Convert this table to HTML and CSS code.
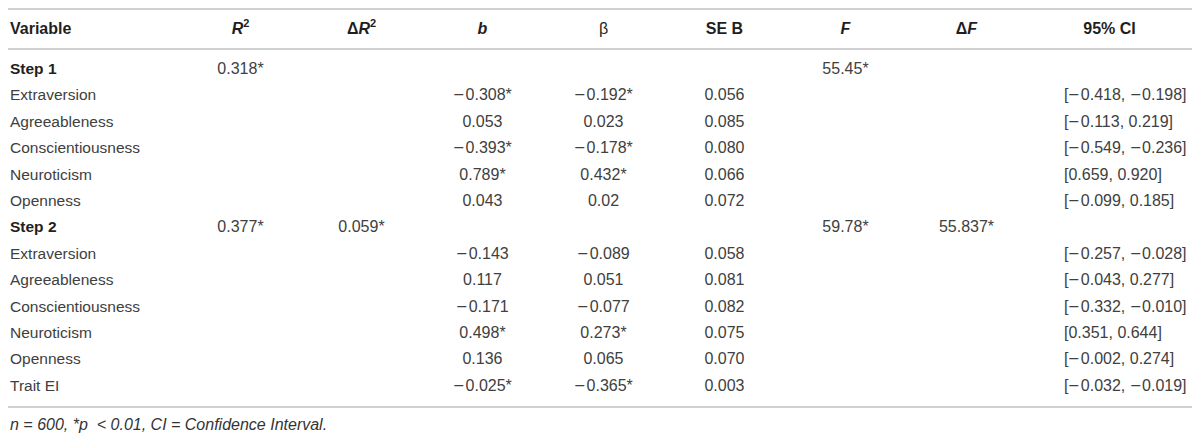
FILE: index.html
```html
<!DOCTYPE html>
<html>
<head>
  <meta charset="utf-8">
  <title>Hierarchical regression</title>
  <link rel="stylesheet" href="styles.css">
</head>
<body>
  <table class="reg-table">
    <colgroup>
      <col class="col-var">
      <col class="col-num"><col class="col-num"><col class="col-num"><col class="col-num">
      <col class="col-num"><col class="col-num"><col class="col-num">
      <col class="col-ci">
    </colgroup>
    <thead>
      <tr>
        <th class="left">Variable</th>
        <th><i>R</i><sup>2</sup></th>
        <th>&Delta;<i>R</i><sup>2</sup></th>
        <th><i>b</i></th>
        <th class="beta">&beta;</th>
        <th>SE B</th>
        <th><i>F</i></th>
        <th>&Delta;<i>F</i></th>
        <th>95% CI</th>
      </tr>
    </thead>
    <tbody>
      <tr class="first">
        <td class="left step">Step 1</td>
        <td>0.318*</td><td></td><td></td><td></td><td></td>
        <td>55.45*</td><td></td><td class="ci"></td>
      </tr>
      <tr>
        <td class="left">Extraversion</td>
        <td></td><td></td><td><span class="neg">&minus;</span>0.308*</td><td><span class="neg">&minus;</span>0.192*</td><td>0.056</td>
        <td></td><td></td><td class="ci">[<span class="neg">&minus;</span>0.418, <span class="neg">&minus;</span>0.198]</td>
      </tr>
      <tr>
        <td class="left">Agreeableness</td>
        <td></td><td></td><td>0.053</td><td>0.023</td><td>0.085</td>
        <td></td><td></td><td class="ci">[<span class="neg">&minus;</span>0.113, 0.219]</td>
      </tr>
      <tr>
        <td class="left">Conscientiousness</td>
        <td></td><td></td><td><span class="neg">&minus;</span>0.393*</td><td><span class="neg">&minus;</span>0.178*</td><td>0.080</td>
        <td></td><td></td><td class="ci">[<span class="neg">&minus;</span>0.549, <span class="neg">&minus;</span>0.236]</td>
      </tr>
      <tr>
        <td class="left">Neuroticism</td>
        <td></td><td></td><td>0.789*</td><td>0.432*</td><td>0.066</td>
        <td></td><td></td><td class="ci">[0.659, 0.920]</td>
      </tr>
      <tr>
        <td class="left">Openness</td>
        <td></td><td></td><td>0.043</td><td>0.02</td><td>0.072</td>
        <td></td><td></td><td class="ci">[<span class="neg">&minus;</span>0.099, 0.185]</td>
      </tr>
      <tr>
        <td class="left step">Step 2</td>
        <td>0.377*</td><td>0.059*</td><td></td><td></td><td></td>
        <td>59.78*</td><td>55.837*</td><td class="ci"></td>
      </tr>
      <tr>
        <td class="left">Extraversion</td>
        <td></td><td></td><td><span class="neg">&minus;</span>0.143</td><td><span class="neg">&minus;</span>0.089</td><td>0.058</td>
        <td></td><td></td><td class="ci">[<span class="neg">&minus;</span>0.257, <span class="neg">&minus;</span>0.028]</td>
      </tr>
      <tr>
        <td class="left">Agreeableness</td>
        <td></td><td></td><td>0.117</td><td>0.051</td><td>0.081</td>
        <td></td><td></td><td class="ci">[<span class="neg">&minus;</span>0.043, 0.277]</td>
      </tr>
      <tr>
        <td class="left">Conscientiousness</td>
        <td></td><td></td><td><span class="neg">&minus;</span>0.171</td><td><span class="neg">&minus;</span>0.077</td><td>0.082</td>
        <td></td><td></td><td class="ci">[<span class="neg">&minus;</span>0.332, <span class="neg">&minus;</span>0.010]</td>
      </tr>
      <tr>
        <td class="left">Neuroticism</td>
        <td></td><td></td><td>0.498*</td><td>0.273*</td><td>0.075</td>
        <td></td><td></td><td class="ci">[0.351, 0.644]</td>
      </tr>
      <tr>
        <td class="left">Openness</td>
        <td></td><td></td><td>0.136</td><td>0.065</td><td>0.070</td>
        <td></td><td></td><td class="ci">[<span class="neg">&minus;</span>0.002, 0.274]</td>
      </tr>
      <tr class="last">
        <td class="left">Trait EI</td>
        <td></td><td></td><td><span class="neg">&minus;</span>0.025*</td><td><span class="neg">&minus;</span>0.365*</td><td>0.003</td>
        <td></td><td></td><td class="ci">[<span class="neg">&minus;</span>0.032, <span class="neg">&minus;</span>0.019]</td>
      </tr>
    </tbody>
  </table>
  <p class="table-note"><i>n</i> = 600, *<i>p</i> &nbsp;&lt; 0.01, CI = Confidence Interval.</p>
</body>
</html>
```

FILE: styles.css
```css
body {
  margin: 8px;
  background: #fff;
  font-family: "Liberation Sans", Arial, sans-serif;
  font-size: 15.5px;
  color: #404040;
}

.reg-table {
  width: 1184px;
  border-collapse: collapse;
  table-layout: fixed;
  border-top: 2px solid #d0d0d0;
  border-bottom: 2px solid #d0d0d0;
}

.col-var { width: 172px; }
.col-num { width: 121px; }
.col-ci { width: 165px; }

.reg-table th {
  padding: 0;
  height: 38px;
  font-size: 16px;
  font-weight: bold;
  color: #1f1f1f;
  text-align: center;
  border-bottom: 2px solid #d0d0d0;
}

.reg-table th.left {
  text-align: left;
  padding-left: 2px;
}

.reg-table th sup {
  font-size: 11px;
  line-height: 0;
  vertical-align: 7px;
}

.reg-table th.beta {
  font-weight: normal;
}

.reg-table td {
  padding: 4px 0;
  line-height: 18.4px;
  font-size: 16px;
  text-align: center;
  white-space: nowrap;
}

.reg-table td.left {
  font-size: 15.5px;
  text-align: left;
  padding-left: 2px;
}

.reg-table td.ci {
  text-align: left;
  padding-left: 37px;
}

.reg-table td.step {
  font-weight: bold;
  color: #1f1f1f;
}

.neg {
  display: inline-block;
  margin: 0 2px 0 1px;
  transform: scaleX(1.15);
}

.reg-table tr.first td {
  padding-top: 10px;
}

.reg-table tr.last td {
  padding-bottom: 11px;
}

.table-note {
  margin: 8px 0 0 2px;
  font-size: 16px;
  font-style: italic;
  color: #333;
}
```
